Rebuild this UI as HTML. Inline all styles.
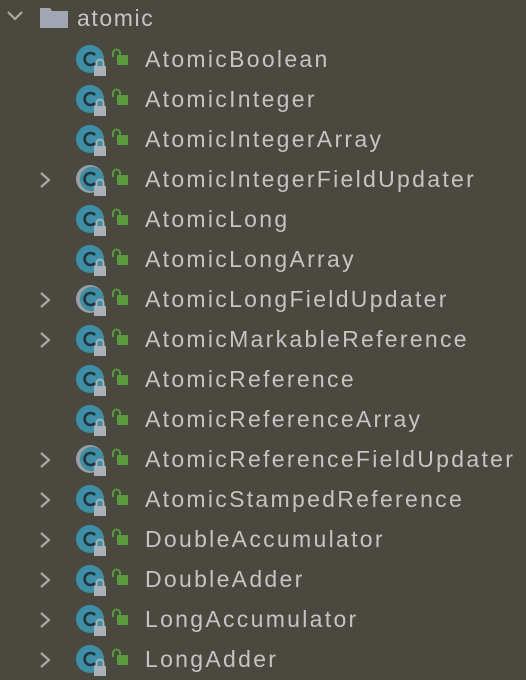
<!DOCTYPE html>
<html><head><style>
body{margin:0;width:526px;height:678px;background:#4b4840;overflow:hidden;font-family:"Liberation Sans",sans-serif;}
.row{position:absolute;left:0;height:40px;width:526px;}
.t{position:absolute;left:145px;top:5px;font-size:23px;letter-spacing:2.3px;color:#c4c4c4;line-height:28px;}
.chev{position:absolute;left:38px;top:11px;}
.ic{position:absolute;left:74px;top:4px;}
</style></head><body>
<div class="row" style="top:0">
<svg style="position:absolute;left:6px;top:10px" width="18" height="12"><path d="M2 2 L9 9 L16 2" stroke="#a8a8a8" stroke-width="2.2" fill="none"/></svg>
<svg style="position:absolute;left:40px;top:8px" width="30" height="22"><path d="M0 0 H10 L12 3 H28 V20 H0 Z" fill="#a0a7b2"/></svg>
<div class="t" style="left:77px;top:4px;letter-spacing:1.6px">atomic</div>
</div>
<div id="list"></div>
<script>
var items=[["AtomicBoolean",0,0],["AtomicInteger",0,0],["AtomicIntegerArray",0,0],["AtomicIntegerFieldUpdater",1,1],["AtomicLong",0,0],["AtomicLongArray",0,0],["AtomicLongFieldUpdater",1,1],["AtomicMarkableReference",1,0],["AtomicReference",0,0],["AtomicReferenceArray",0,0],["AtomicReferenceFieldUpdater",1,1],["AtomicStampedReference",1,0],["DoubleAccumulator",1,0],["DoubleAdder",1,0],["LongAccumulator",1,0],["LongAdder",1,0]];
var h="";
items.forEach(function(it,i){
var y=40+i*40;
h+='<div class="row" style="top:'+y+'px">';
if(it[1])h+='<svg class="chev" width="14" height="18"><path d="M3 2 L11 9 L3 16" stroke="#a8a8a8" stroke-width="2.2" fill="none"/></svg>';
h+='<svg class="ic" width="60" height="34">';
if(it[2])h+='<circle cx="16" cy="15" r="14" fill="#9aa0a8"/><circle cx="18" cy="15" r="12" fill="#4b4840"/><circle cx="18" cy="15" r="12" fill="#3e8fa6"/>';
else h+='<circle cx="16" cy="15" r="14" fill="#3e8fa6"/>';
h+='<path d="M21 11 A6 6 0 1 0 21 19" stroke="#23343a" stroke-width="2.6" fill="none"/>';
h+='<rect x="20" y="22" width="12" height="10" fill="#a9b0b8"/><path d="M22.5 22 V19 A3.5 3.5 0 0 1 29.5 19 V22" stroke="#a9b0b8" stroke-width="2" fill="none"/>';
h+='<rect x="43" y="11" width="11" height="10" fill="#5a9a3e"/><path d="M39 13 V9 A3.5 3.5 0 0 1 46 9 V11" stroke="#5a9a3e" stroke-width="2" fill="none"/>';
h+='</svg><div class="t">'+it[0]+'</div></div>';
});
document.getElementById("list").innerHTML=h;
</script>
</body></html>
